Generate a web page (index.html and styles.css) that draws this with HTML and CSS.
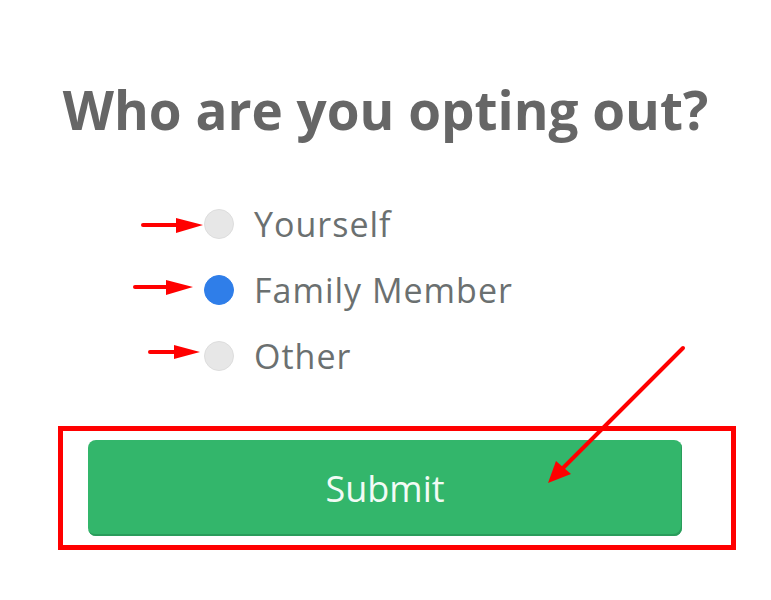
FILE: index.html
```html
<!DOCTYPE html>
<html>
<head>
<meta charset="utf-8">
<link rel="stylesheet" href="styles.css">
</head>
<body>
<div class="page">
  <h1 class="title">Who are you opting out?</h1>
  <ul class="options">
    <li class="option"><span class="radio"></span><span class="label">Yourself</span></li>
    <li class="option"><span class="radio checked"></span><span class="label">Family Member</span></li>
    <li class="option"><span class="radio"></span><span class="label">Other</span></li>
  </ul>
  <div class="highlight">
    <button class="submit">Submit</button>
  </div>
  <svg class="annotations" width="771" height="600" viewBox="0 0 771 600">
    <g fill="#ff0000" stroke="#ff0000" stroke-linecap="round">
      <line x1="143" y1="225" x2="182" y2="225" stroke-width="4"/>
      <polygon points="176,218 203,225 176,233" stroke="none"/>
      <line x1="135" y1="287" x2="172" y2="287" stroke-width="4"/>
      <polygon points="166,280 193,287 166,295" stroke="none"/>
      <line x1="150" y1="352" x2="178" y2="352" stroke-width="4"/>
      <polygon points="174,345 200,352 174,359" stroke="none"/>
      <line x1="683" y1="348" x2="560" y2="471" stroke-width="4"/>
      <polygon points="548,483 556,461 571,474" stroke="none"/>
    </g>
  </svg>
</div>
</body>
</html>
```

FILE: styles.css
```css
html, body {
  margin: 0;
  padding: 0;
  background: #ffffff;
}
.page {
  position: relative;
  width: 771px;
  height: 600px;
  font-family: "Open Sans", "Lato", sans-serif;
  overflow: hidden;
}
.title {
  margin: 0;
  padding-top: 78px;
  text-align: center;
  font-size: 53px;
  line-height: 64px;
  font-weight: 700;
  color: #666666;
  letter-spacing: 0;
}
.options {
  list-style: none;
  margin: 0;
  padding: 49px 0 0 204px;
}
.option {
  display: flex;
  align-items: center;
  gap: 20px;
  height: 66px;
}
.radio {
  width: 28px;
  height: 28px;
  border-radius: 50%;
  background: #e7e7e7;
  border: 1px solid #dddddd;
  flex: none;
}
.radio.checked {
  background: #2f7ee9;
  border-color: #2f7ee9;
}
.label {
  font-size: 34px;
  letter-spacing: 1px;
  color: #6b7070;
}
.highlight {
  box-sizing: border-box;
  margin: 37px 0 0 58px;
  width: 678px;
  border: 5px solid #ff0000;
  padding: 9px 49px 9px 25px;
}
.submit {
  display: block;
  width: 594px;
  height: 96px;
  border: none;
  border-radius: 8px;
  background: #33b66b;
  box-shadow: inset -1px -2px 0 #2a9c5b;
  color: #f2fbf5;
  font-family: "Open Sans", "Lato", sans-serif;
  font-size: 36px;
  padding: 0;
}
.annotations {
  position: absolute;
  left: 0;
  top: 0;
  pointer-events: none;
}
```
